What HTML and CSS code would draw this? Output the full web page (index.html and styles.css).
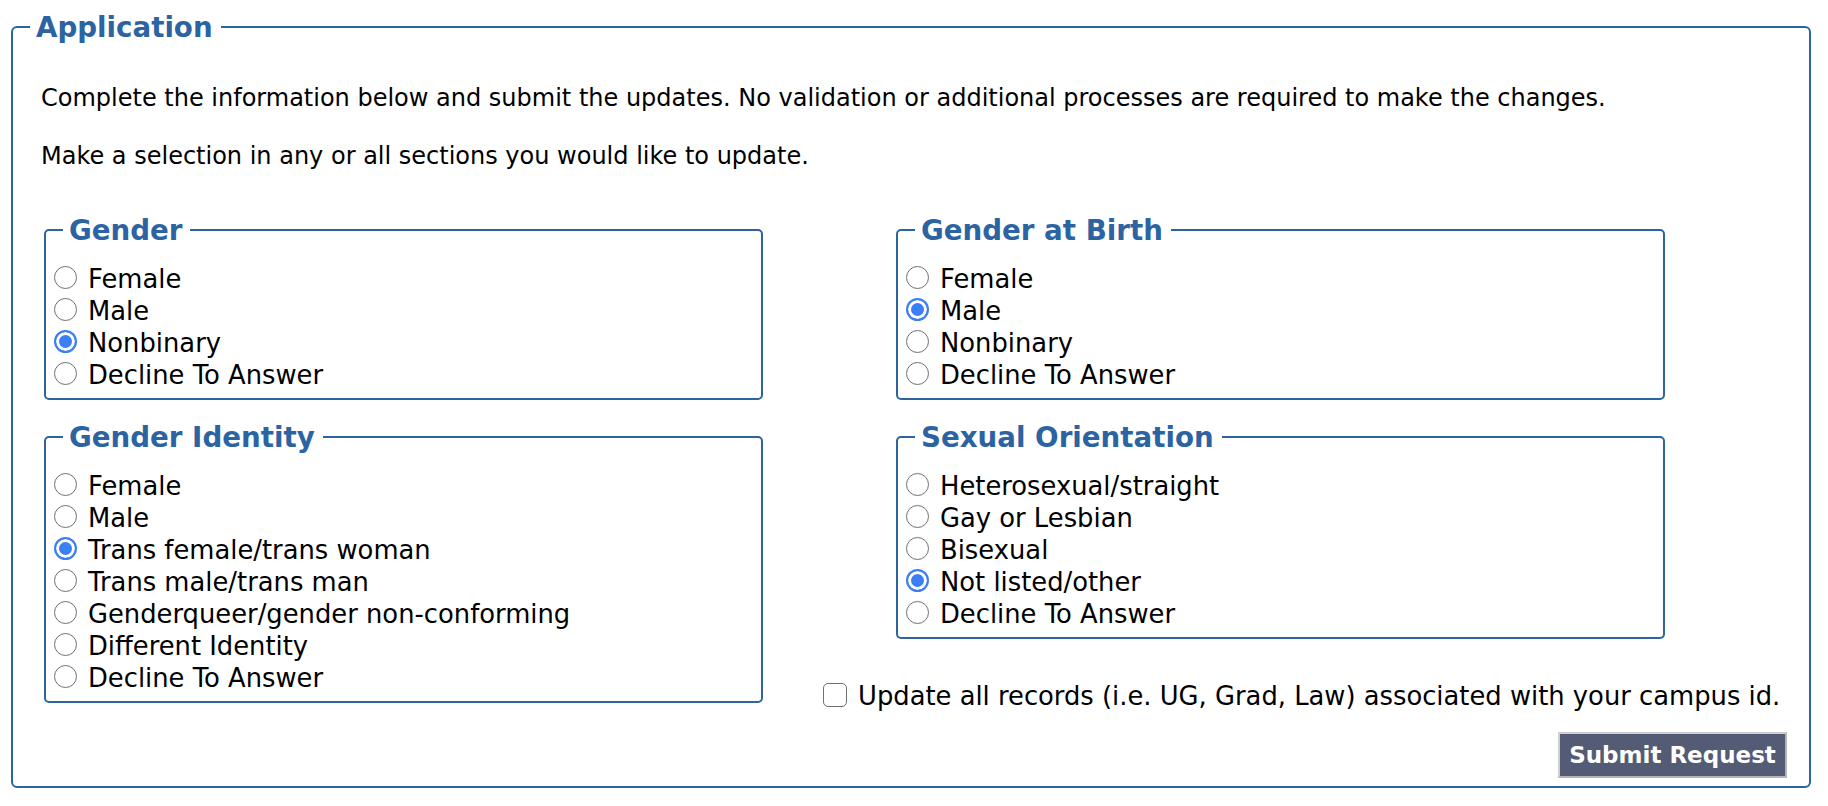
FILE: index.html
```html
<!DOCTYPE html>
<html lang="en">
<head>
<meta charset="utf-8">
<title>Application</title>
<link rel="stylesheet" href="styles.css">
</head>
<body>
<form class="app-form">
  <fieldset class="outer">
    <legend class="outer-legend">Application</legend>
    <div class="outer-body">
      <p class="intro">Complete the information below and submit the updates. No validation or additional processes are required to make the changes.</p>
      <p class="intro">Make a selection in any or all sections you would like to update.</p>
      <div class="columns">
        <div class="col col-left">
          <fieldset class="group">
            <legend class="group-legend">Gender</legend>
            <div class="options">
              <label class="opt"><input type="radio" name="gender"><span>Female</span></label>
              <label class="opt"><input type="radio" name="gender"><span>Male</span></label>
              <label class="opt"><input type="radio" name="gender" checked><span>Nonbinary</span></label>
              <label class="opt"><input type="radio" name="gender"><span>Decline To Answer</span></label>
            </div>
          </fieldset>
          <fieldset class="group">
            <legend class="group-legend">Gender Identity</legend>
            <div class="options">
              <label class="opt"><input type="radio" name="identity"><span>Female</span></label>
              <label class="opt"><input type="radio" name="identity"><span>Male</span></label>
              <label class="opt"><input type="radio" name="identity" checked><span>Trans female/trans woman</span></label>
              <label class="opt"><input type="radio" name="identity"><span>Trans male/trans man</span></label>
              <label class="opt"><input type="radio" name="identity"><span>Genderqueer/gender non-conforming</span></label>
              <label class="opt"><input type="radio" name="identity"><span>Different Identity</span></label>
              <label class="opt"><input type="radio" name="identity"><span>Decline To Answer</span></label>
            </div>
          </fieldset>
        </div>
        <div class="col col-right">
          <fieldset class="group group-right">
            <legend class="group-legend">Gender at Birth</legend>
            <div class="options">
              <label class="opt"><input type="radio" name="birth"><span>Female</span></label>
              <label class="opt"><input type="radio" name="birth" checked><span>Male</span></label>
              <label class="opt"><input type="radio" name="birth"><span>Nonbinary</span></label>
              <label class="opt"><input type="radio" name="birth"><span>Decline To Answer</span></label>
            </div>
          </fieldset>
          <fieldset class="group group-right">
            <legend class="group-legend">Sexual Orientation</legend>
            <div class="options">
              <label class="opt"><input type="radio" name="orient"><span>Heterosexual/straight</span></label>
              <label class="opt"><input type="radio" name="orient"><span>Gay or Lesbian</span></label>
              <label class="opt"><input type="radio" name="orient"><span>Bisexual</span></label>
              <label class="opt"><input type="radio" name="orient" checked><span>Not listed/other</span></label>
              <label class="opt"><input type="radio" name="orient"><span>Decline To Answer</span></label>
            </div>
          </fieldset>
          <label class="all-records"><input type="checkbox"><span>Update all records (i.e. UG, Grad, Law) associated with your campus id.</span></label>
          <div class="actions">
            <button type="button" class="submit">Submit Request</button>
          </div>
        </div>
      </div>
    </div>
  </fieldset>
</form>
</body>
</html>
```

FILE: styles.css
```css
html, body {
  margin: 0;
  padding: 0;
  background: #ffffff;
}

body {
  font-family: "DejaVu Sans", Verdana, sans-serif;
  color: #000000;
}

.app-form {
  padding: 10px 0 0 11px;
}

fieldset {
  margin: 0;
  padding: 0;
  min-width: 0;
  box-sizing: border-box;
}

.outer {
  width: 1800px;
  border: 2px solid #2d63a1;
  border-radius: 6px;
}

.outer-legend,
.group-legend {
  font-weight: bold;
  font-size: 27.7px;
  line-height: 32px;
  color: #2c63a2;
  padding: 2px 8px 0 6px;
  margin-left: 17px;
}

.outer-body {
  padding: 41px 22px 8px 28px;
}

.intro {
  margin: 0 0 32px 0;
  font-size: 24px;
  line-height: 26px;
}

.intro + .intro {
  margin-bottom: 0;
}

.columns {
  display: flex;
  margin: 44px 0 0 3px;
}

.col {
  display: flex;
  flex-direction: column;
  gap: 20px;
}

.col-left {
  width: 779px;
}

.col-right {
  width: 964px;
}

.group {
  width: 719px;
  border: 2px solid #2d63a1;
  border-radius: 5px;
}

.group-right {
  width: 769px;
  margin-left: 73px;
}

.options {
  padding: 16px 0 7px 8px;
  display: flex;
  flex-direction: column;
}

.opt {
  display: flex;
  align-items: center;
  height: 32px;
  font-size: 25.8px;
  line-height: 32px;
}

input[type="radio"] {
  appearance: none;
  -webkit-appearance: none;
  width: 23px;
  height: 23px;
  margin: 0 11px 3px 0;
  border: 1.5px solid #6f6f6f;
  border-radius: 50%;
  background: #ffffff;
  box-sizing: border-box;
  flex: none;
}

input[type="radio"]:checked {
  border: 2px solid #3b7ef5;
  background: #3b7ef5;
  box-shadow: inset 0 0 0 3px #ffffff;
}

.all-records {
  display: flex;
  align-items: center;
  height: 32px;
  font-size: 25.8px;
  line-height: 32px;
  margin-top: 21px;
  white-space: nowrap;
}

input[type="checkbox"] {
  appearance: none;
  -webkit-appearance: none;
  width: 24px;
  height: 24px;
  margin: 0 11px 3px 0;
  border: 1.5px solid #6f6f6f;
  border-radius: 5px;
  background: #ffffff;
  box-sizing: border-box;
  flex: none;
}

.actions {
  display: flex;
  justify-content: flex-end;
  margin-top: 0;
}

.submit {
  width: 229px;
  height: 46px;
  padding: 0;
  background: #545b74;
  color: #ffffff;
  font-family: "DejaVu Sans", Verdana, sans-serif;
  font-weight: bold;
  font-size: 23px;
  border: 2px solid #cfcfcf;
  border-right-color: #b5b5b5;
  border-bottom-color: #b5b5b5;
  border-radius: 0;
}
```
